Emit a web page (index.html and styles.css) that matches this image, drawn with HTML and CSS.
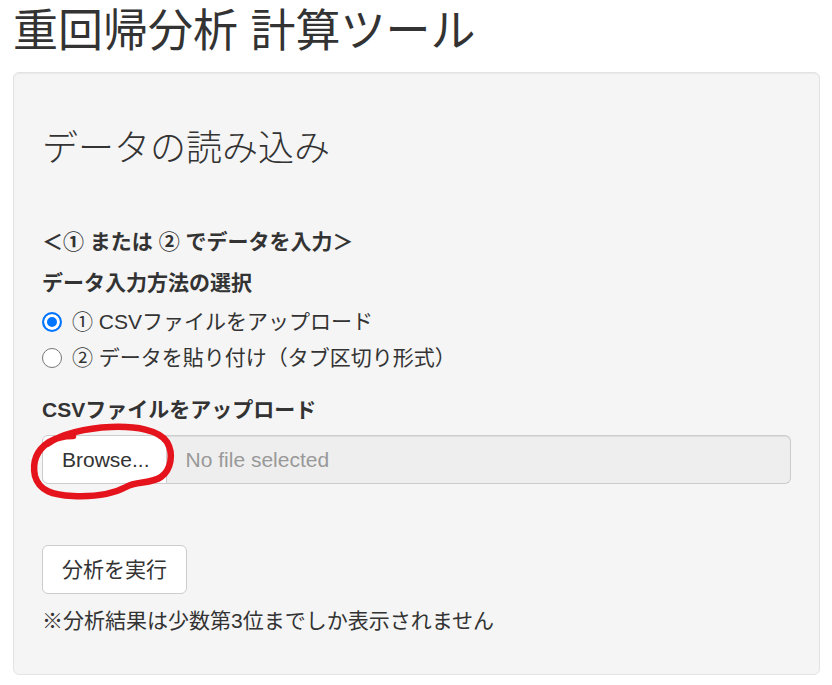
FILE: index.html
```html
<!DOCTYPE html>
<html lang="ja">
<head>
<meta charset="utf-8">
<title>重回帰分析 計算ツール</title>
<link rel="stylesheet" href="styles.css">
</head>
<body>
<div class="container">
  <h2 class="title">重回帰分析 計算ツール</h2>
  <div class="well">
    <h3 class="section">データの読み込み</h3>
    <p class="hint">＜① または ② でデータを入力＞</p>
    <div class="group">
      <div class="label">データ入力方法の選択</div>
      <label class="radio"><input type="radio" name="m" checked><span>① CSVファイルをアップロード</span></label>
      <label class="radio"><input type="radio" name="m"><span>② データを貼り付け（タブ区切り形式）</span></label>
    </div>
    <div class="label upload-label">CSVファイルをアップロード</div>
    <div class="file-row">
      <span class="btn browse">Browse...</span>
      <input class="file-name" type="text" placeholder="No file selected" readonly>
      <svg class="mark" viewBox="28 420 152 82" width="152" height="82" aria-hidden="true">
        <path d="M46 444 C60 434 85 428 110 427 C135 426 158 430 166 442 C173 454 170 470 160 477 C150 484 135 481 125 487 C112 494 95 497 72 496 C52 495 38 491 34 476 C31 462 36 450 48 442 C56 437 64 436 72 436" fill="none" stroke="#e5141c" stroke-width="6.5" stroke-linecap="round" stroke-linejoin="round"/>
      </svg>
    </div>
    <button class="btn run" type="button">分析を実行</button>
    <p class="note">※分析結果は少数第3位までしか表示されません</p>
  </div>
</div>
</body>
</html>
```
FILE: styles.css
```css
html, body {
  margin: 0;
  padding: 0;
  background: #fff;
}
body {
  font-family: "Liberation Sans", "Noto Sans CJK JP", sans-serif;
  font-size: 21px;
  line-height: 30px;
  color: #333;
}
.container {
  padding: 0 12px 0 13px;
}
.title {
  font-size: 45px;
  font-weight: 400;
  line-height: 50px;
  margin: 7px 0 15px;
}
.well {
  background: #f5f5f5;
  border: 1px solid #e3e3e3;
  border-radius: 6px;
  box-shadow: inset 0 1px 1px rgba(0,0,0,.05);
  padding: 28px;
}
.section {
  font-size: 36px;
  font-weight: 300;
  line-height: 40px;
  margin: 28px 0 0;
}
.hint {
  font-weight: 700;
  margin: 58px 0 0;
}
.group {
  margin-top: 11px;
}
.label {
  font-weight: 700;
}
.radio {
  display: flex;
  align-items: center;
  gap: 10px;
  height: 36px;
}
.radio:first-of-type {
  margin-top: 6px;
}
.radio input {
  appearance: none;
  -webkit-appearance: none;
  flex: none;
  margin: 0 0 0 0;
  width: 20px;
  height: 20px;
  border: 1.5px solid #767676;
  border-radius: 50%;
  background: #fff;
  box-sizing: border-box;
}
.radio input:checked {
  border: 2px solid #0075ff;
  background: #0075ff;
  box-shadow: inset 0 0 0 3px #fff;
}
.upload-label {
  margin-top: 19px;
}
.file-row {
  position: relative;
  display: flex;
  margin-top: 10px;
  height: 49px;
}
.btn {
  box-sizing: border-box;
  font-family: inherit;
  font-size: 21px;
  color: #333;
  background: #fff;
  border: 1px solid #ccc;
  border-radius: 6px;
  display: inline-flex;
  align-items: center;
  height: 49px;
}
.browse {
  border-radius: 6px 0 0 6px;
  padding: 0 16px 0 19px;
}
.file-name {
  flex: 1;
  box-sizing: border-box;
  height: 49px;
  margin: 0;
  border: 1px solid #ccc;
  border-left: 0;
  border-radius: 0 6px 6px 0;
  background: #eee;
  font-family: inherit;
  font-size: 21px;
  padding: 0 19px;
  color: #555;
  box-shadow: inset 0 1px 1px rgba(0,0,0,.075);
}
.file-name::placeholder {
  color: #999;
}
.mark {
  position: absolute;
  left: -13px;
  top: -15px;
  overflow: visible;
  pointer-events: none;
}
.run {
  margin-top: 61px;
  padding: 0 19px 4px;
}
.note {
  margin: 12px 0 10px;
}
```
